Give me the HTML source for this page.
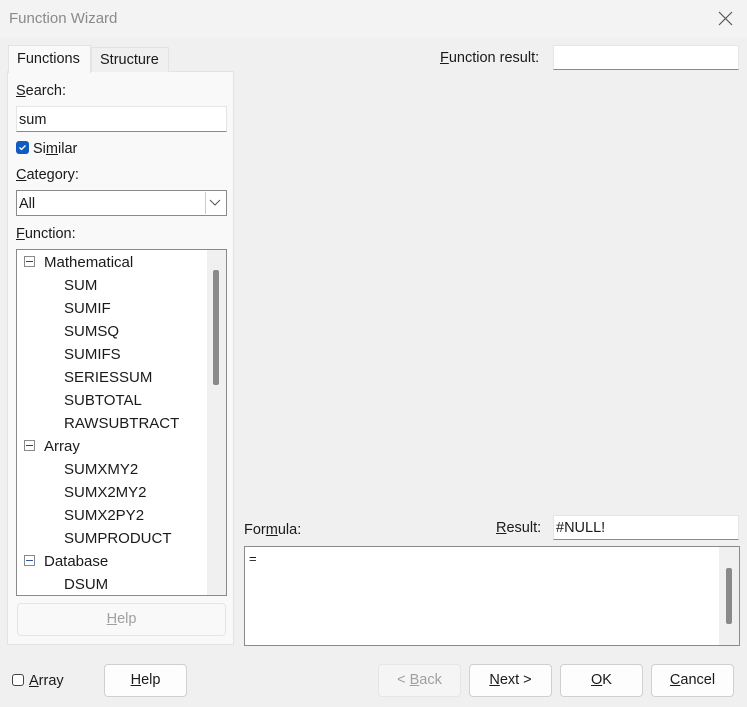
<!DOCTYPE html>
<html><head><style>
*{margin:0;padding:0;box-sizing:border-box}
body{width:747px;height:707px;background:#f0f0f0;font-family:"Liberation Sans",sans-serif;font-size:14.5px;color:#1a1a1a;position:relative;overflow:hidden}
.a{position:absolute}
u{text-decoration:underline}
.inp{position:absolute;background:#fff;border:1px solid #e5e5e5;border-bottom:1px solid #8a8a8a}
.btn{position:absolute;background:#fdfdfd;border:1px solid #d0d0d0;border-radius:4px;text-align:center;line-height:31px;height:33px;width:83px}
.row{position:absolute;left:64px;font-size:15px}
</style></head><body>
<div class="a" style="left:0;top:0;width:747px;height:38px;background:#f3f3f3"></div>
<div class="a" style="left:9px;top:10px;font-size:15px;color:#8a8a8a">Function Wizard</div>
<svg class="a" style="left:718px;top:11px" width="15" height="15"><path d="M1 1L14 14M14 1L1 14" stroke="#555" stroke-width="1.2"/></svg>

<div class="a" style="left:7px;top:71px;width:227px;height:574px;background:#f9f9f9;border:1px solid #e3e3e3"></div>
<div class="a" style="left:8px;top:45px;width:83px;height:28px;background:#f9f9f9;border:1px solid #e3e3e3;border-bottom:none"></div>
<div class="a" style="left:17px;top:51px">Functions</div>
<div class="a" style="left:91px;top:47px;width:78px;height:25px;background:#f0f0f0;border:1px solid #e3e3e3;border-bottom:none"></div>
<div class="a" style="left:100px;top:52px">Structure</div>

<div class="a" style="left:16px;top:83px"><u>S</u>earch:</div>
<div class="inp" style="left:16px;top:106px;width:211px;height:26px"></div>
<div class="a" style="left:19px;top:112px">sum</div>
<div class="a" style="left:16px;top:141px;width:13px;height:13px;background:#0f5cc0;border-radius:3px"></div>
<svg class="a" style="left:16px;top:141px" width="13" height="13"><path d="M3.5 6.5L5.5 8.5L9.5 4.5" stroke="#fff" stroke-width="1.3" fill="none"/></svg>
<div class="a" style="left:33px;top:141px">Si<u>m</u>ilar</div>
<div class="a" style="left:16px;top:167px"><u>C</u>ategory:</div>
<div class="a" style="left:16px;top:190px;width:211px;height:26px;background:#fff;border:1px solid #8a8a8a"></div>
<div class="a" style="left:19px;top:196px">All</div>
<div class="a" style="left:205px;top:192px;width:20px;height:22px;border-left:1px solid #ccc;background:#fff"></div>
<svg class="a" style="left:209px;top:199px" width="12" height="8"><path d="M1 1L6 6L11 1" stroke="#555" fill="none"/></svg>
<div class="a" style="left:16px;top:226px"><u>F</u>unction:</div>
<div class="a" style="left:16px;top:249px;width:211px;height:347px;background:#fff;border:1px solid #8a8a8a;overflow:hidden">
<div class="a" style="left:190px;top:0;width:20px;height:347px;background:#f0f0f0"></div>
<div class="a" style="left:196px;top:20px;width:6px;height:115px;background:#8a8a8a;border-radius:2px"></div>
</div>
<div class="a" style="left:24px;top:256px;width:11px;height:11px;border:1px solid #888"></div><div class="a" style="left:26px;top:261px;width:7px;height:1px;background:#444"></div>
<div class="a" style="left:44px;top:254px;font-size:15px">Mathematical</div>
<div class="row" style="top:277px">SUM</div>
<div class="row" style="top:300px">SUMIF</div>
<div class="row" style="top:323px">SUMSQ</div>
<div class="row" style="top:346px">SUMIFS</div>
<div class="row" style="top:369px">SERIESSUM</div>
<div class="row" style="top:392px">SUBTOTAL</div>
<div class="row" style="top:415px">RAWSUBTRACT</div>
<div class="a" style="left:24px;top:440px;width:11px;height:11px;border:1px solid #888"></div><div class="a" style="left:26px;top:445px;width:7px;height:1px;background:#444"></div>
<div class="a" style="left:44px;top:438px;font-size:15px">Array</div>
<div class="row" style="top:461px">SUMXMY2</div>
<div class="row" style="top:484px">SUMX2MY2</div>
<div class="row" style="top:507px">SUMX2PY2</div>
<div class="row" style="top:530px">SUMPRODUCT</div>
<div class="a" style="left:24px;top:555px;width:11px;height:11px;border:1px solid #888"></div><div class="a" style="left:26px;top:560px;width:7px;height:1px;background:#3355aa"></div>
<div class="a" style="left:44px;top:553px;font-size:15px">Database</div>
<div class="row" style="top:576px">DSUM</div>
<div class="a" style="left:17px;top:603px;width:209px;height:33px;border:1px solid #e5e5e5;border-radius:4px;background:#f9f9f9;text-align:center;line-height:31px;color:#a0a0a0"><u>H</u>elp</div>

<div class="a" style="left:440px;top:50px"><u>F</u>unction result:</div>
<div class="inp" style="left:553px;top:45px;width:186px;height:25px"></div>
<div class="a" style="left:244px;top:522px">For<u>m</u>ula:</div>
<div class="a" style="left:496px;top:520px"><u>R</u>esult:</div>
<div class="inp" style="left:553px;top:515px;width:186px;height:25px"></div>
<div class="a" style="left:556px;top:520px">#NULL!</div>
<div class="a" style="left:244px;top:546px;width:496px;height:100px;background:#fff;border:1px solid #8a8a8a">
<div class="a" style="left:474px;top:0;width:20px;height:98px;background:#f0f0f0"></div>
<div class="a" style="left:481px;top:21px;width:6px;height:56px;background:#8a8a8a;border-radius:2px"></div>
<div class="a" style="left:4px;top:4px;font-size:13px">=</div>
</div>

<div class="a" style="left:12px;top:674px;width:12px;height:12px;border:1px solid #444;border-radius:3px;background:#fff"></div>
<div class="a" style="left:29px;top:673px"><u>A</u>rray</div>
<div class="btn" style="left:104px;top:664px"><u>H</u>elp</div>
<div class="btn" style="left:378px;top:664px;background:#f5f5f5;border-color:#e5e5e5;color:#a0a0a0">&lt; <u>B</u>ack</div>
<div class="btn" style="left:469px;top:664px"><u>N</u>ext &gt;</div>
<div class="btn" style="left:560px;top:664px"><u>O</u>K</div>
<div class="btn" style="left:651px;top:664px"><u>C</u>ancel</div>
</body></html>
